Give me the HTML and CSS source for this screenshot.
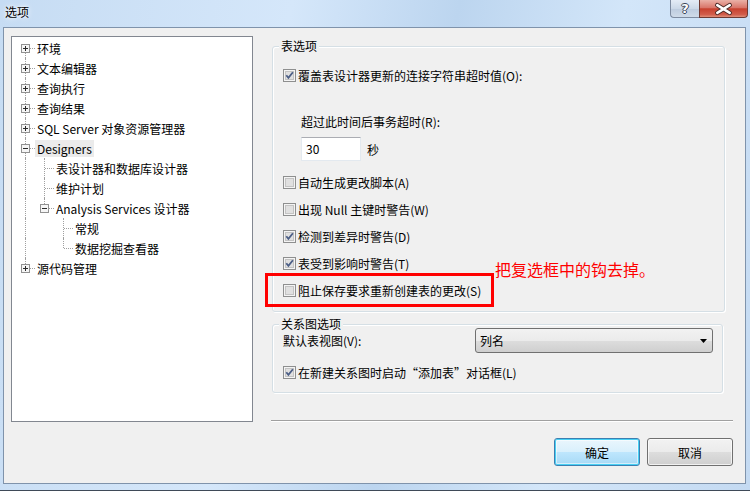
FILE: index.html
```html
<!DOCTYPE html>
<html lang="zh-CN">
<head>
<meta charset="utf-8">
<title>选项</title>
<link rel="stylesheet" href="styles.css">
</head>
<body>
<div class="window">
  <div class="titlebar">
    <span class="title">选项</span>
    <div class="caption">
      <div class="cap help"><span class="q">?</span></div>
      <div class="cap close">
        <svg width="49" height="18" viewBox="0 0 49 18">
          <path d="M18 5 L31 13 M31 5 L18 13" stroke="#4a2a26" stroke-width="4.6" stroke-linecap="round" fill="none"/>
          <path d="M18 5 L31 13 M31 5 L18 13" stroke="#ffffff" stroke-width="2.6" stroke-linecap="round" fill="none"/>
        </svg>
      </div>
    </div>
  </div>

  <div class="client">
    <div class="tree">
      <div class="row"><span class="cell t-bot t-h"><svg class="exp" viewBox="0 0 9 9"><rect x="0.5" y="0.5" width="8" height="8" fill="#f6f6f6" stroke="#919191"/><path d="M2 4.5H7M4.5 2V7" stroke="#2a2a2a"/></svg></span><span class="label">环境</span></div>
      <div class="row"><span class="cell t-full t-h"><svg class="exp" viewBox="0 0 9 9"><rect x="0.5" y="0.5" width="8" height="8" fill="#f6f6f6" stroke="#919191"/><path d="M2 4.5H7M4.5 2V7" stroke="#2a2a2a"/></svg></span><span class="label">文本编辑器</span></div>
      <div class="row"><span class="cell t-full t-h"><svg class="exp" viewBox="0 0 9 9"><rect x="0.5" y="0.5" width="8" height="8" fill="#f6f6f6" stroke="#919191"/><path d="M2 4.5H7M4.5 2V7" stroke="#2a2a2a"/></svg></span><span class="label">查询执行</span></div>
      <div class="row"><span class="cell t-full t-h"><svg class="exp" viewBox="0 0 9 9"><rect x="0.5" y="0.5" width="8" height="8" fill="#f6f6f6" stroke="#919191"/><path d="M2 4.5H7M4.5 2V7" stroke="#2a2a2a"/></svg></span><span class="label">查询结果</span></div>
      <div class="row"><span class="cell t-full t-h"><svg class="exp" viewBox="0 0 9 9"><rect x="0.5" y="0.5" width="8" height="8" fill="#f6f6f6" stroke="#919191"/><path d="M2 4.5H7M4.5 2V7" stroke="#2a2a2a"/></svg></span><span class="label">SQL Server 对象资源管理器</span></div>
      <div class="row"><span class="cell t-full t-h"><svg class="exp" viewBox="0 0 9 9"><rect x="0.5" y="0.5" width="8" height="8" fill="#f6f6f6" stroke="#919191"/><path d="M2 4.5H7" stroke="#2a2a2a"/></svg></span><span class="label sel">Designers</span></div>
      <div class="row"><span class="cell t-full"></span><span class="cell t-full t-h"></span><span class="label">表设计器和数据库设计器</span></div>
      <div class="row"><span class="cell t-full"></span><span class="cell t-full t-h"></span><span class="label">维护计划</span></div>
      <div class="row"><span class="cell t-full"></span><span class="cell t-top t-h"><svg class="exp" viewBox="0 0 9 9"><rect x="0.5" y="0.5" width="8" height="8" fill="#f6f6f6" stroke="#919191"/><path d="M2 4.5H7" stroke="#2a2a2a"/></svg></span><span class="label">Analysis Services 设计器</span></div>
      <div class="row"><span class="cell t-full"></span><span class="cell"></span><span class="cell t-full t-h"></span><span class="label">常规</span></div>
      <div class="row"><span class="cell t-full"></span><span class="cell"></span><span class="cell t-top t-h"></span><span class="label">数据挖掘查看器</span></div>
      <div class="row"><span class="cell t-top t-h"><svg class="exp" viewBox="0 0 9 9"><rect x="0.5" y="0.5" width="8" height="8" fill="#f6f6f6" stroke="#919191"/><path d="M2 4.5H7M4.5 2V7" stroke="#2a2a2a"/></svg></span><span class="label">源代码管理</span></div>
    </div>

    <div class="right">
      <div class="group g1">
        <div class="legend">表选项</div>
        <div class="cb-row first">
          <svg class="cb" viewBox="0 0 13 13"><rect x="0.5" y="0.5" width="12" height="12" fill="#f4f4f4" stroke="#8e8f8f"/><rect x="2.5" y="2.5" width="8" height="8" fill="#e0e0e0" stroke="#c3c3c3"/><path d="M3.3 6.3 L5.4 8.9 L9.9 3.3" stroke="#4b5e86" stroke-width="1.8" fill="none"/></svg>
          <span>覆盖表设计器更新的连接字符串超时值(O):</span>
        </div>
        <div class="sub-label">超过此时间后事务超时(R):</div>
        <div class="input-row">
          <div class="textbox">30</div>
          <span>秒</span>
        </div>
        <div class="cb-row after-input">
          <svg class="cb" viewBox="0 0 13 13"><rect x="0.5" y="0.5" width="12" height="12" fill="#f4f4f4" stroke="#8e8f8f"/><rect x="2.5" y="2.5" width="8" height="8" fill="#e0e0e0" stroke="#c3c3c3"/></svg>
          <span>自动生成更改脚本(A)</span>
        </div>
        <div class="cb-row">
          <svg class="cb" viewBox="0 0 13 13"><rect x="0.5" y="0.5" width="12" height="12" fill="#f4f4f4" stroke="#8e8f8f"/><rect x="2.5" y="2.5" width="8" height="8" fill="#e0e0e0" stroke="#c3c3c3"/></svg>
          <span>出现 Null 主键时警告(W)</span>
        </div>
        <div class="cb-row">
          <svg class="cb" viewBox="0 0 13 13"><rect x="0.5" y="0.5" width="12" height="12" fill="#f4f4f4" stroke="#8e8f8f"/><rect x="2.5" y="2.5" width="8" height="8" fill="#e0e0e0" stroke="#c3c3c3"/><path d="M3.3 6.3 L5.4 8.9 L9.9 3.3" stroke="#4b5e86" stroke-width="1.8" fill="none"/></svg>
          <span>检测到差异时警告(D)</span>
        </div>
        <div class="cb-row">
          <svg class="cb" viewBox="0 0 13 13"><rect x="0.5" y="0.5" width="12" height="12" fill="#f4f4f4" stroke="#8e8f8f"/><rect x="2.5" y="2.5" width="8" height="8" fill="#e0e0e0" stroke="#c3c3c3"/><path d="M3.3 6.3 L5.4 8.9 L9.9 3.3" stroke="#4b5e86" stroke-width="1.8" fill="none"/></svg>
          <span>表受到影响时警告(T)</span>
        </div>
        <div class="cb-row">
          <svg class="cb" viewBox="0 0 13 13"><rect x="0.5" y="0.5" width="12" height="12" fill="#f4f4f4" stroke="#8e8f8f"/><rect x="2.5" y="2.5" width="8" height="8" fill="#e0e0e0" stroke="#c3c3c3"/></svg>
          <span>阻止保存要求重新创建表的更改(S)</span>
        </div>
      </div>

      <div class="group g2">
        <div class="legend">关系图选项</div>
        <div class="combo-row">
          <span>默认表视图(V):</span>
          <div class="combo">
            <span>列名</span>
            <svg class="arrow" width="7" height="4" viewBox="0 0 7 4"><path d="M0 0H7L3.5 4Z" fill="#000"/></svg>
          </div>
        </div>
        <div class="cb-row g2cb">
          <svg class="cb" viewBox="0 0 13 13"><rect x="0.5" y="0.5" width="12" height="12" fill="#f4f4f4" stroke="#8e8f8f"/><rect x="2.5" y="2.5" width="8" height="8" fill="#e0e0e0" stroke="#c3c3c3"/><path d="M3.3 6.3 L5.4 8.9 L9.9 3.3" stroke="#4b5e86" stroke-width="1.8" fill="none"/></svg>
          <span>在新建关系图时启动“添加表”对话框(L)</span>
        </div>
      </div>

      <div class="sep"></div>

      <div class="buttons">
        <div class="btn default">确定</div>
        <div class="btn">取消</div>
      </div>
    </div>
  </div>

  <div class="annot-box"></div>
  <div class="annot-text">把复选框中的钩去掉。</div>
</div>
</body>
</html>
```

FILE: styles.css
```css
* { box-sizing: border-box; }
html, body { margin: 0; padding: 0; }
body {
  width: 750px;
  height: 491px;
  overflow: hidden;
  font-family: "Noto Sans CJK SC", "Noto Sans", sans-serif;
  font-size: 12px;
  color: #000;
}
.window {
  position: relative;
  width: 750px;
  height: 491px;
  display: flex;
  flex-direction: column;
  background: linear-gradient(100deg, #c6dcf3 0%, #d5e7fa 35%, #bcd5ef 55%, #d3e6f9 75%, #c4daf2 100%);
  border-bottom: 1px solid #3f4a58;
}
.titlebar {
  height: 27px;
  flex: none;
  display: flex;
  align-items: flex-start;
}
.title {
  padding-left: 5px;
  line-height: 24px;
  text-shadow: 0 0 6px #fff, 0 0 3px #fff;
}
.caption {
  margin-left: auto;
  margin-right: 2px;
  display: flex;
}
.cap {
  height: 18px;
  display: flex;
  align-items: center;
  justify-content: center;
}
.help {
  width: 29px;
  border: 1px solid #7d8ba0;
  border-top: none;
  border-right: none;
  border-bottom-left-radius: 4px;
  background: linear-gradient(#e4ecf6, #ccd9e8 50%, #bccbde 51%, #cfdbe9);
}
.q {
  font-family: "DejaVu Sans", sans-serif;
  font-weight: bold;
  font-size: 13px;
  line-height: 16px;
  color: #fff;
  text-shadow: 1px 0 0 #3a4658, -1px 0 0 #3a4658, 0 1px 0 #3a4658, 0 -1px 0 #3a4658;
}
.close {
  width: 49px;
  border: 1px solid #6e3a33;
  border-top: none;
  border-bottom-right-radius: 4px;
  background: linear-gradient(#eab1a7, #d9766a 45%, #c7412f 52%, #d15d4b 85%, #e08f7a);
}
.close svg { display: block; }

.client {
  height: 457px;
  margin: 0 4px 0 3px;
  border: 1px solid #7f93ab;
  background: #f0f0f0;
  padding: 8px 12px 0 7px;
  display: grid;
  grid-template-columns: 242px 462px;
  column-gap: 18px;
  align-items: start;
}

/* tree */
.tree {
  height: 386px;
  border: 1px solid #828790;
  background: #fff;
  padding-top: 1px;
}
.row {
  height: 20px;
  display: flex;
  align-items: center;
  padding-left: 4px;
}
.cell {
  position: relative;
  width: 19px;
  height: 20px;
  flex: none;
}
.t-full::before,
.t-top::before,
.t-bot::before {
  content: "";
  position: absolute;
  left: 9px;
  border-left: 1px dotted #a0a0a0;
}
.t-full::before { top: 0; bottom: 0; }
.t-top::before { top: 0; height: 10px; }
.t-bot::before { top: 10px; bottom: 0; }
.t-h::after {
  content: "";
  position: absolute;
  left: 10px;
  right: 0;
  top: 10px;
  border-top: 1px dotted #a0a0a0;
}
.exp {
  position: absolute;
  left: 5px;
  top: 6px;
  width: 9px;
  height: 9px;
  z-index: 1;
}
.label {
  padding: 0 2px;
  line-height: 17px;
  white-space: nowrap;
}
.label.sel { background: #ebebeb; }

/* right side */
.right {
  display: flex;
  flex-direction: column;
}
.group {
  display: flex;
  flex-direction: column;
  border: 1px solid #d5dfe5;
  border-radius: 3px;
  box-shadow: inset 1px 1px 0 #fff, 1px 1px 0 #fff;
  padding-left: 10px;
}
.legend {
  align-self: flex-start;
  margin: -8px 0 -6px -4px;
  padding: 0 2px;
  line-height: 14px;
  background: #f0f0f0;
}
.g1 {
  height: 266px;
  margin: 10px 8px 0 1px;
}
.cb-row {
  display: flex;
  align-items: center;
  gap: 2px;
  height: 20px;
  margin-top: 7px;
  white-space: nowrap;
}
.cb-row.first { margin-top: 18px; }
.cb-row.after-input { margin-top: 11px; }
.cb { width: 13px; height: 13px; flex: none; }
.sub-label {
  height: 20px;
  line-height: 20px;
  margin-top: 27px;
  padding-left: 18px;
}
.input-row {
  display: flex;
  align-items: center;
  gap: 6px;
  height: 24px;
  margin-top: 5px;
  padding-left: 18px;
}
.textbox {
  width: 60px;
  height: 24px;
  background: #fff;
  border: 1px solid #e3e9ef;
  border-top-color: #abadb3;
  padding-left: 4px;
  line-height: 22px;
}

.g2 {
  height: 69px;
  margin: 12px 10px 0 1px;
  padding-right: 9px;
}
.combo-row {
  display: flex;
  align-items: center;
  height: 25px;
  margin-top: 3px;
}
.combo {
  margin-left: auto;
  width: 238px;
  height: 25px;
  border: 1px solid #707070;
  border-radius: 3px;
  background: linear-gradient(#f2f2f2, #ebebeb 50%, #dddddd 51%, #cfcfcf);
  display: flex;
  align-items: center;
  padding: 0 5px 0 4px;
}
.combo .arrow { margin-left: auto; }
.cb-row.g2cb { margin-top: 9px; }

.sep {
  margin-top: 27px;
  height: 2px;
  border-top: 1px solid #a0a0a0;
  border-bottom: 1px solid #fff;
}
.buttons {
  display: flex;
  justify-content: flex-end;
  gap: 7px;
  margin-top: 16px;
}
.btn {
  width: 86px;
  height: 28px;
  border: 1px solid #707070;
  border-radius: 3px;
  background: linear-gradient(#f2f2f2, #ebebeb 50%, #dddddd 51%, #cfcfcf);
  box-shadow: inset 0 0 0 1px rgba(255,255,255,0.7);
  display: flex;
  align-items: center;
  justify-content: center;
}
.btn.default {
  border-color: #3c7fb1;
  background: linear-gradient(#eaf6fd, #d9f0fc 50%, #bee6fd 51%, #a7d9f5);
  box-shadow: inset 0 0 0 1px #48d0f4, inset 0 0 0 2px rgba(255,255,255,0.5);
}

/* annotations drawn over the dialog */
.annot-box {
  position: absolute;
  left: 265px;
  top: 273px;
  width: 229px;
  height: 34px;
  border: 3px solid #ff0000;
}
.annot-text {
  position: absolute;
  left: 495px;
  top: 260px;
  font-size: 16px;
  line-height: 18px;
  color: #ff0000;
  white-space: nowrap;
}
```
